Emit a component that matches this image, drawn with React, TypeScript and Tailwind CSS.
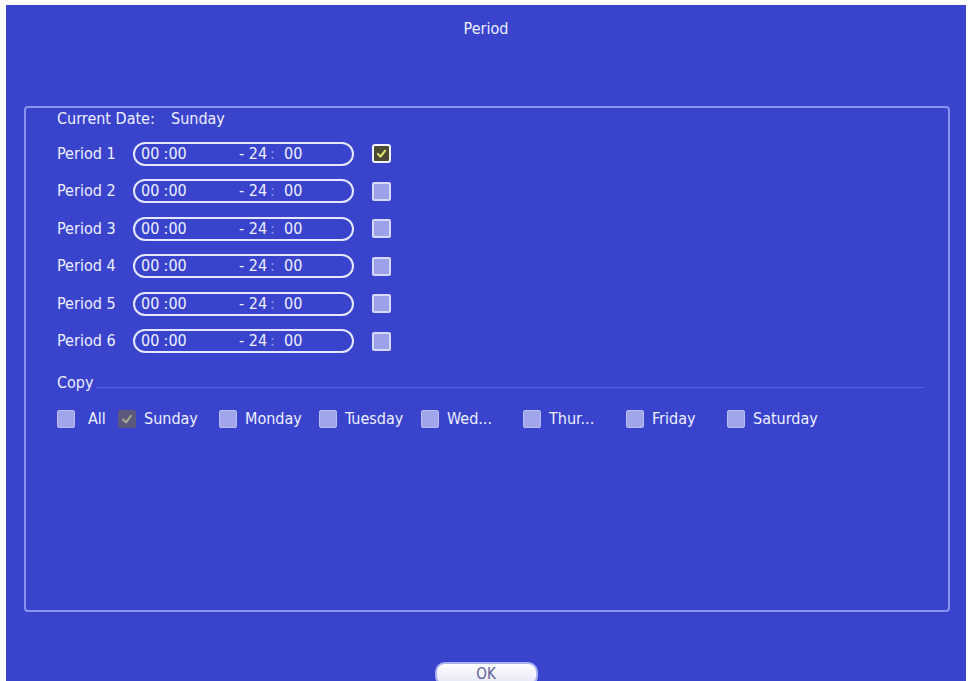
import React from 'react'

const font = { fontFamily: '"Liberation Sans Narrow", "DejaVu Sans Condensed", "Liberation Sans", Arial, sans-serif' }

const periods = [1, 2, 3, 4, 5, 6]

const days = [
  { name: 'All', w: 'w-[61px]', checked: false },
  { name: 'Sunday', w: 'w-[101px]', checked: true },
  { name: 'Monday', w: 'w-[100px]', checked: false },
  { name: 'Tuesday', w: 'w-[102px]', checked: false },
  { name: 'Wed...', w: 'w-[102px]', checked: false },
  { name: 'Thur...', w: 'w-[103px]', checked: false },
  { name: 'Friday', w: 'w-[101px]', checked: false },
  { name: 'Saturday', w: 'w-[101px]', checked: false },
]

function Tick({ color }: { color: string }) {
  return (
    <svg viewBox="0 0 16 16" className="w-full h-full">
      <path d="M3.5 8.5 L6.8 11.8 L12.5 4.5" fill="none" stroke={color} strokeWidth="2.4" strokeLinecap="round" strokeLinejoin="round" />
    </svg>
  )
}

function TimeField() {
  return (
    <div className="flex items-center w-[221px] h-[24px] rounded-full border-2 border-[#e6e8ff] pl-[6px] text-[#eef0ff]">
      <span className="w-[18px]">00</span>
      <span className="w-[80px]">&nbsp;:00</span>
      <span className="w-[31px]">- 24</span>
      <span className="w-[14px] text-[#8d93e6]">:</span>
      <span>00</span>
    </div>
  )
}

export default function App() {
  return (
    <div className="w-[971px] h-[681px] bg-white overflow-hidden pt-[5px] pl-[6px]" style={font}>
      <div className="w-[960px] h-[676px] bg-[#3a43cc] flex flex-col text-[16px] text-[#eef0ff]">
        {/* title */}
        <div className="shrink-0 h-[44px] pt-[12px] text-center">Period</div>

        {/* settings panel */}
        <div className="shrink-0 mt-[57px] ml-[18px] w-[926px] h-[506px] border-2 border-[#8b92ef] rounded-[4px] pl-[31px] flex flex-col">
          <div className="h-[22px] flex items-center">
            <span className="w-[114px]">Current Date:</span>
            <span>Sunday</span>
          </div>

          <div className="mt-[5px] flex flex-col">
            {periods.map(n => (
              <div key={n} className="h-[37.5px] flex items-center">
                <span className="w-[76px]">Period {n}</span>
                <TimeField />
                <div
                  className={
                    n === 1
                      ? 'ml-[18px] w-[19px] h-[19px] border-2 border-[#f2f2ff] bg-[#4c4b36] rounded-[3px] p-[1px]'
                      : 'ml-[18px] w-[19px] h-[19px] border-2 border-[#d6d9fb] bg-[#9ca2ea] rounded-[2px]'
                  }
                >
                  {n === 1 && <Tick color="#e9ec6a" />}
                </div>
              </div>
            ))}
          </div>

          <div className="mt-[11px] h-[24px] flex items-center pr-[24px]">
            <span>Copy</span>
            <div className="flex-1 h-px bg-[#5760e0] ml-[2px] mt-[8px]" />
          </div>

          <div className="mt-[12px] h-[24px] flex items-center">
            {days.map(d => (
              <div key={d.name} className={`${d.w} flex items-center gap-[8px]`}>
                <div
                  className={
                    d.checked
                      ? 'w-[18px] h-[18px] bg-[#5b5a7e] rounded-[2px] p-[2px]'
                      : 'w-[18px] h-[18px] bg-[#a1a6ec] border border-[#b9bdf3] rounded-[2px]'
                  }
                >
                  {d.checked && <Tick color="#a8a890" />}
                </div>
                <span className={d.name === 'All' ? 'ml-[5px]' : ''}>{d.name}</span>
              </div>
            ))}
          </div>
        </div>

        {/* footer */}
        <div className="shrink-0 flex justify-center mt-[50px]">
          <button className="w-[103px] h-[24px] rounded-[10px] border-2 border-[#aab0f2] bg-gradient-to-b from-white to-[#e4e6f6] text-[#5b6098] text-[15px] leading-none">
            OK
          </button>
        </div>
      </div>
    </div>
  )
}
